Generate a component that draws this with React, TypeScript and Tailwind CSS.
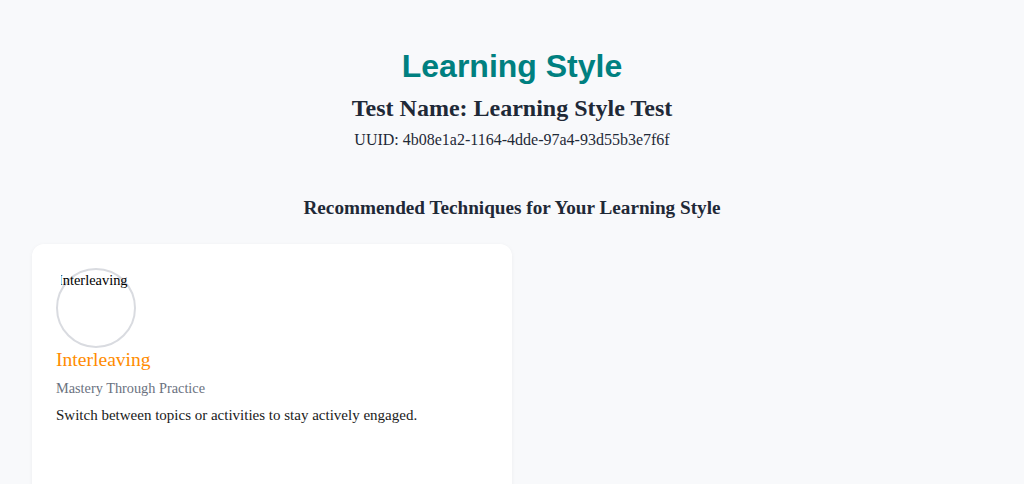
import React from 'react';

export default function App() {
  return (
    <div className="min-h-screen bg-[#f8f9fb] px-8 pt-[48px] font-['Liberation_Serif',serif]">
      <div className="text-center">
        <h1 className="text-[32px] leading-[1.15] font-bold text-[#008080] font-['Liberation_Sans',Arial,sans-serif]">
          Learning Style
        </h1>
        <h2 className="mt-[10px] text-[24px] leading-[1.15] font-bold text-[#1f2937]">
          Test Name: Learning Style Test
        </h2>
        <p className="mt-[9px] text-[16px] leading-[1.15] text-[#1f2937]">
          UUID: 4b08e1a2-1164-4dde-97a4-93d55b3e7f6f
        </p>
        <h3 className="mt-[47px] text-[19.2px] leading-[1.15] font-bold text-[#1f2937]">
          Recommended Techniques for Your Learning Style
        </h3>
      </div>
      <div className="mt-[25px] grid grid-cols-2">
        <div className="w-[480px] h-[260px] rounded-xl bg-white p-6 shadow-[0_1px_4px_rgba(0,0,0,0.05)]">
          <div className="w-20 h-20 rounded-full border-2 border-[#d9dbe0] pt-[2px]">
            <div className="ml-[3px] w-[71px] overflow-hidden whitespace-nowrap text-[14.4px] leading-[1.15] text-black">
              <span className="-ml-[3px] block">Interleaving</span>
            </div>
          </div>
          <h4 className="mt-[1px] text-[19.6px] leading-[1.15] text-[#ff8c00]">Interleaving</h4>
          <p className="mt-[9px] text-[14.3px] leading-[1.15] text-[#6b7280]">Mastery Through Practice</p>
          <p className="mt-[10px] text-[15px] leading-[1.15] text-[#1a1a1a]">
            Switch between topics or activities to stay actively engaged.
          </p>
        </div>
      </div>
    </div>
  );
}
